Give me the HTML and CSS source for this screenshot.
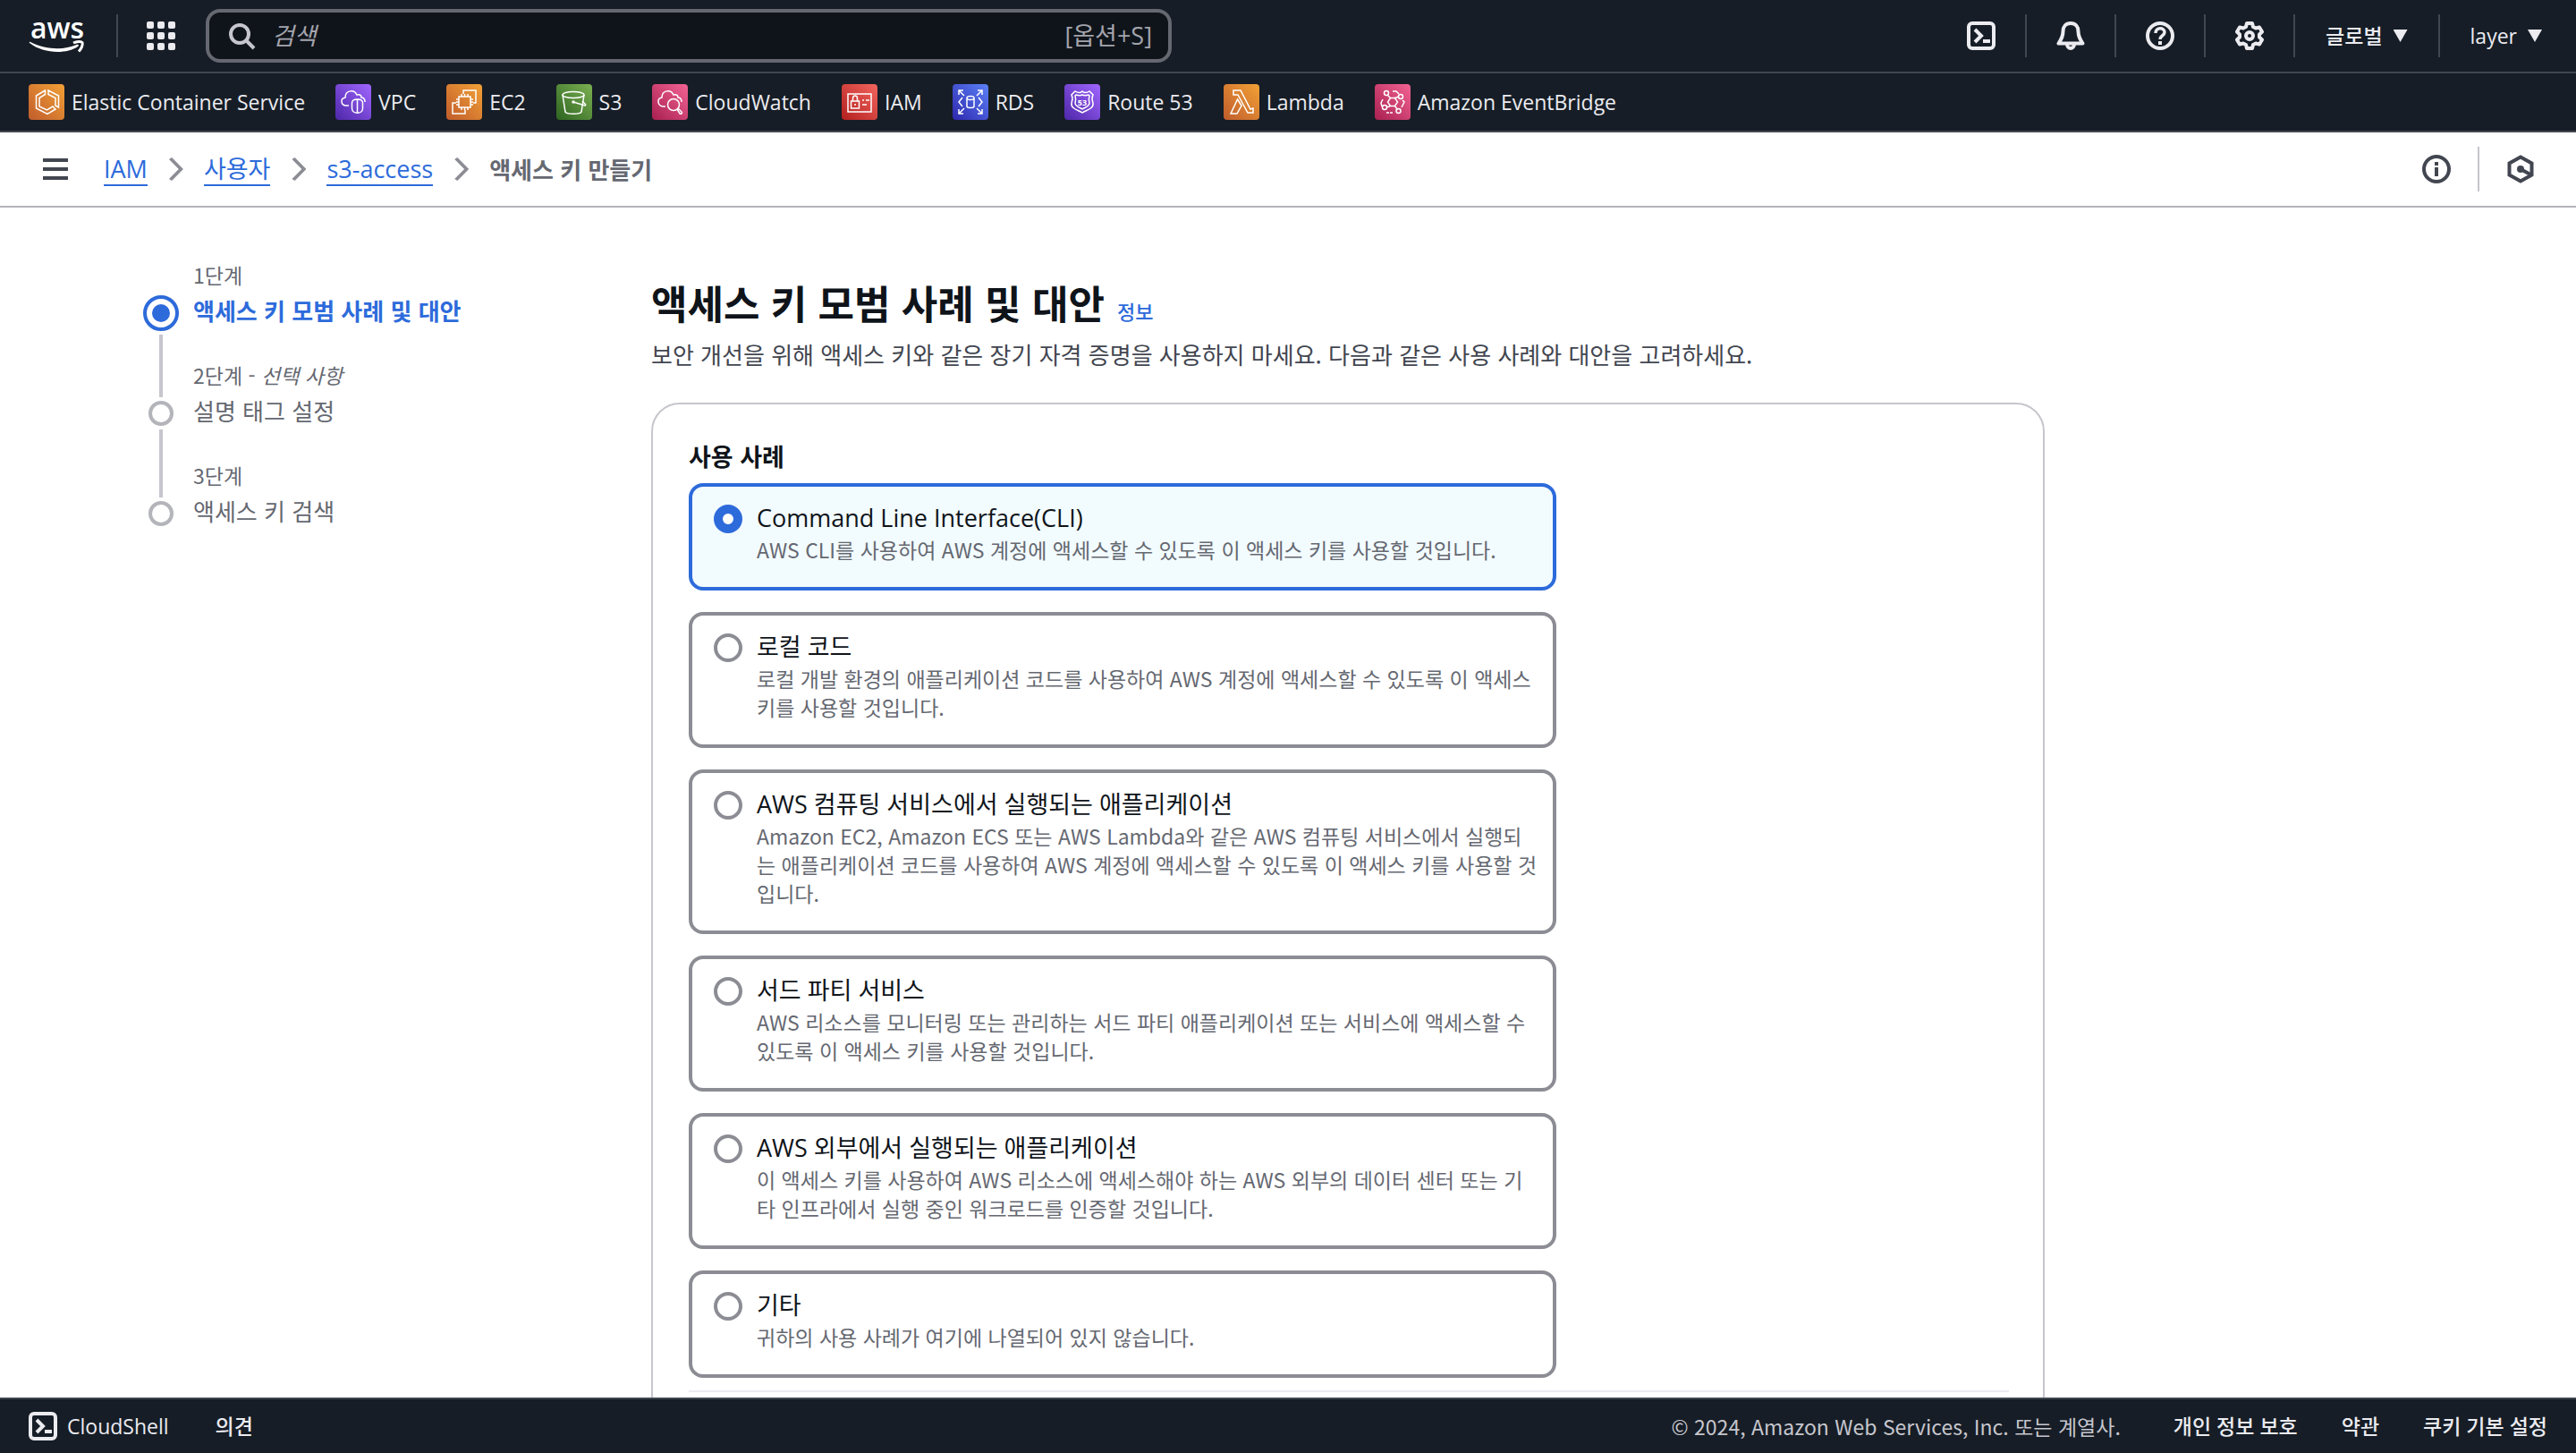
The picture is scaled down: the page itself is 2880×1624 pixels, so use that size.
FILE: index.html
```html
<!DOCTYPE html>
<html lang="ko">
<head>
<meta charset="utf-8">
<meta name="viewport" content="width=device-width, initial-scale=1">
<title>액세스 키 만들기 | IAM</title>
<link rel="stylesheet" href="styles.css">
</head>
<body>
<header class="top">
  <div class="topbar">
    <a class="logo" href="#" aria-label="AWS">
      <svg width="64" height="64" viewBox="0 -7 64 64"><text class="logo-text" x="32" y="28" text-anchor="middle">aws</text><path d="M1 33C16 45 42 46 55 37c2-1.500.5-3-1.500-2C40 41 20 41 2 32c-1-.5-1.500.3-1 1z" fill="#fff"/><path d="M50 33c4-2 9-2 10-.5 1 2-.8 7-4 10" fill="none" stroke="#fff" stroke-width="3"/></svg>
    </a>
    <span class="rule"></span>
    <button class="icon-btn" aria-label="서비스">
      <svg width="32" height="32" viewBox="0 0 32 32" fill="currentColor"><rect width="8" height="8" rx="2"/><rect x="12" width="8" height="8" rx="2"/><rect x="24" width="8" height="8" rx="2"/><rect y="12" width="8" height="8" rx="2"/><rect x="12" y="12" width="8" height="8" rx="2"/><rect x="24" y="12" width="8" height="8" rx="2"/><rect y="24" width="8" height="8" rx="2"/><rect x="12" y="24" width="8" height="8" rx="2"/><rect x="24" y="24" width="8" height="8" rx="2"/></svg>
    </button>
    <label class="search">
      <svg width="32" height="32" viewBox="0 0 32 32" fill="none" stroke="currentColor" stroke-width="4"><circle cx="14" cy="14" r="10"/><path d="M21 21l9 9"/></svg>
      <input type="search" placeholder="검색" aria-label="검색">
      <span class="hint">[옵션+S]</span>
    </label>
    <div class="tools">
      <button class="tool" aria-label="CloudShell"><svg width="32" height="32" viewBox="0 0 32 32" fill="none" stroke="currentColor" stroke-width="4"><rect x="2" y="2" width="28" height="28" rx="4"/><path d="M9 9l7 7-7 7" stroke-width="4"/><path d="M18 22h8"/></svg></button>
      <button class="tool" aria-label="알림"><svg width="32" height="32" viewBox="0 0 32 32" fill="none" stroke="currentColor" stroke-width="4" stroke-linejoin="round"><path d="M16 2c-5.500 0-8.500 4-8.500 9 0 6-2 9-5 13.500h27c-3-4.500-5-7.500-5-13.500 0-5-3-9-8.500-9z"/><path d="M12 25c0 6.500 8 6.500 8 0" /></svg></button>
      <button class="tool" aria-label="도움말"><svg width="32" height="32" viewBox="0 0 32 32" fill="none" stroke="currentColor" stroke-width="4"><circle cx="16" cy="16" r="14"/><path d="M11 13c0-7 10-6.500 10-1 0 4-5 3.500-5 8" stroke-width="3.500"/><path d="M16 22v4"/></svg></button>
      <button class="tool" aria-label="설정"><svg width="32" height="32" viewBox="0 0 32 32" fill="none" stroke="currentColor" stroke-width="4" stroke-linejoin="round"><path d="M13 2h6l1 4 3 1.500 4-1 3 5-3 3v3l3 3-3 5-4-1-3 1.500-1 4h-6l-1-4-3-1.500-4 1-3-5 3-3v-3l-3-3 3-5 4 1L12 6z"/><circle cx="16" cy="16" r="4"/></svg></button>
      <button class="tool menu">글로벌<span class="caret"></span></button>
      <button class="tool menu">layer<span class="caret"></span></button>
    </div>
  </div>
  <nav class="services">
    <a href="#"><span class="badge orange"><svg viewBox="0 0 40 40"><path d="M18.500 7L8.500 13v14L21 33.500 30 28l-3-3-6.500 4L12 25v-9.500l6.500-4zM22 7l11.500 6v13L30 24v-8.500l-8-4z"/></svg></span>Elastic Container Service</a>
    <a href="#"><span class="badge purple"><svg viewBox="0 0 40 40"><path d="M15 24h-3c-6 0-7-8-1-9 0-8 10-10 13-3 4-1 5 1 5 3 3 0 4 2 4 5M24.500 17c4 0 6 2 6 4v6c0 7-12 7-12 0v-6c0-2 2-4 6-4zM24.500 17v15"/></svg></span>VPC</a>
    <a href="#"><span class="badge orange"><svg viewBox="0 0 40 40"><path d="M14 14h13v12H14zM17 11v3M20.500 11v3M24 11v3M17 26v3M20.500 26v3M24 26v3M11 17h3M11 20h3M11 23h3M27 17h3M27 20h3M27 23h3M19 11V7h14v14h-3M11 21H7v12h14v-4"/></svg></span>EC2</a>
    <a href="#"><span class="badge green"><svg viewBox="0 0 40 40"><path d="M7 12l3 19c1 3 17 3 18 0l3-19"/><ellipse cx="19" cy="12" rx="12" ry="3.500"/><path d="M19 20l13 4c2-1-1-3-3-5"/><circle cx="19" cy="20" r="1"/></svg></span>S3</a>
    <a href="#"><span class="badge pink"><svg viewBox="0 0 40 40"><path d="M15 25h-3c-6-1-7-9-1-10 0-8 10-10 13-3 4-1 5 1 5 3 3 0 4 2 4 5"/><circle cx="24" cy="23" r="6.500"/><path d="M28 28l3 5c2 1 3-1 2-2l-4-4"/></svg></span>CloudWatch</a>
    <a href="#"><span class="badge red"><svg viewBox="0 0 40 40"><path d="M7 11h26v20H7zM10.500 19h9v8h-9zM12.500 19v-3c0-4 5-4 5 0v3M15 22v2M23 18h2M27 18h4M23 23h5"/></svg></span>IAM</a>
    <a href="#"><span class="badge blue"><svg viewBox="0 0 40 40"><path d="M7 12V7h5M7 7l6 6M28 7h5v5M33 7l-6 6M7 28v5h5M7 33l6-6M28 33h5v-5M33 33l-6-6M11 15l-4 5 4 5M29 15l4 5-4 5M16 16v9c0 2 8 2 8 0v-9"/><ellipse cx="20" cy="15.500" rx="4" ry="2"/></svg></span>RDS</a>
    <a href="#"><span class="badge purple"><svg viewBox="0 0 40 40"><path d="M12 8c3 2 6 2 8 0 2 2 5 2 8 0l4 4c-2 4-1 6 0 9 1 7-8 8-12 11-4-3-13-4-12-11 1-3 2-5 0-9z"/><path d="M13 12c3 1 5 1 7 0 2 1 4 1 7 0l1 1c-1 3-1 5 0 8 0 4-5 5-8 7-3-2-8-3-8-7 1-3 1-5 0-8z"/><text x="20" y="24" text-anchor="middle">53</text></svg></span>Route 53</a>
    <a href="#"><span class="badge orange"><svg viewBox="0 0 40 40"><path d="M11 7h8l11 21 3-1v5h-6L16 12h-5zM15.500 17l4.500 7-5 9H8z"/></svg></span>Lambda</a>
    <a href="#"><span class="badge pink"><svg viewBox="0 0 40 40"><path d="M17.500 15.500h5l3 4.500-3 4.500h-5l-3-4.500zM14 12l3.500 3.500M22.500 15.500L27 14M22.500 24.500l3 4M17.500 24.500L13 26M20 8h4l3 3M31 18l2 2-3 6M16 32h-3M8 25l-1-4 2-4M20 32h-3"/><circle cx="13" cy="10" r="2.500"/><circle cx="29" cy="14" r="2.500"/><circle cx="26.500" cy="30" r="2.500"/><circle cx="11" cy="26" r="2.500"/></svg></span>Amazon EventBridge</a>
  </nav>
</header>
<div class="pathbar">
  <button class="menu-btn" aria-label="탐색 메뉴"><svg width="28" height="24" viewBox="0 0 28 24" fill="currentColor"><path d="M0 0h28v4H0zM0 10h28v4H0zM0 20h28v4H0z"/></svg></button>
  <nav aria-label="이동 경로">
    <ol class="crumbs">
      <li><a href="#">IAM</a></li>
      <li><a href="#">사용자</a></li>
      <li><a href="#">s3-access</a></li>
      <li class="current">액세스 키 만들기</li>
    </ol>
  </nav>
  <div class="panel-tools">
    <button aria-label="정보 패널"><svg width="32" height="32" viewBox="0 0 32 32" fill="none" stroke="currentColor" stroke-width="4"><circle cx="16" cy="16" r="14"/><path d="M16 8v4M16 14v10"/></svg></button>
    <button aria-label="진단"><svg width="32" height="32" viewBox="0 0 32 32" fill="none" stroke="currentColor" stroke-width="4"><path d="M16 2.500L28.500 9.500v13L16 29.500 3.500 22.500v-13z"/><circle cx="16" cy="16" r="4" fill="currentColor" stroke="none"/><path d="M16 16l11 6"/></svg></button>
  </div>
</div>
<main class="main">
  <ol class="steps">
    <li class="step active"><span class="marker"><i></i></span><div><small>1단계</small><a href="#">액세스 키 모범 사례 및 대안</a></div></li>
    <li class="step"><span class="marker"><i></i></span><div><small>2단계 - <em>선택 사항</em></small><span>설명 태그 설정</span></div></li>
    <li class="step"><span class="marker"><i></i></span><div><small>3단계</small><span>액세스 키 검색</span></div></li>
  </ol>
  <section class="content">
    <div class="heading"><h1>액세스 키 모범 사례 및 대안</h1><a href="#">정보</a></div>
    <p class="lead">보안 개선을 위해 액세스 키와 같은 장기 자격 증명을 사용하지 마세요. 다음과 같은 사용 사례와 대안을 고려하세요.</p>
    <form class="box">
      <fieldset>
        <legend>사용 사례</legend>
        <label class="tile"><input type="radio" name="use" checked><span><b>Command Line Interface(CLI)</b><small>AWS CLI를 사용하여 AWS 계정에 액세스할 수 있도록 이 액세스 키를 사용할 것입니다.</small></span></label>
        <label class="tile"><input type="radio" name="use"><span><b>로컬 코드</b><small>로컬 개발 환경의 애플리케이션 코드를 사용하여 AWS 계정에 액세스할 수 있도록 이 액세스<br>키를 사용할 것입니다.</small></span></label>
        <label class="tile"><input type="radio" name="use"><span><b>AWS 컴퓨팅 서비스에서 실행되는 애플리케이션</b><small>Amazon EC2, Amazon ECS 또는 AWS Lambda와 같은 AWS 컴퓨팅 서비스에서 실행되<br>는 애플리케이션 코드를 사용하여 AWS 계정에 액세스할 수 있도록 이 액세스 키를 사용할 것<br>입니다.</small></span></label>
        <label class="tile"><input type="radio" name="use"><span><b>서드 파티 서비스</b><small>AWS 리소스를 모니터링 또는 관리하는 서드 파티 애플리케이션 또는 서비스에 액세스할 수<br>있도록 이 액세스 키를 사용할 것입니다.</small></span></label>
        <label class="tile"><input type="radio" name="use"><span><b>AWS 외부에서 실행되는 애플리케이션</b><small>이 액세스 키를 사용하여 AWS 리소스에 액세스해야 하는 AWS 외부의 데이터 센터 또는 기<br>타 인프라에서 실행 중인 워크로드를 인증할 것입니다.</small></span></label>
        <label class="tile"><input type="radio" name="use"><span><b>기타</b><small>귀하의 사용 사례가 여기에 나열되어 있지 않습니다.</small></span></label>
      </fieldset>
      <hr>
    </form>
  </section>
</main>
<footer class="footer">
  <button class="shell"><svg width="32" height="32" viewBox="0 0 32 32" fill="none" stroke="currentColor" stroke-width="4"><rect x="2" y="2" width="28" height="28" rx="4"/><path d="M9 9l7 7-7 7"/><path d="M18 22h8"/></svg>CloudShell</button>
  <a href="#">의견</a>
  <span class="copy">© 2024, Amazon Web Services, Inc. 또는 계열사.</span>
  <a href="#">개인 정보 보호</a>
  <a href="#">약관</a>
  <a href="#">쿠키 기본 설정</a>
</footer>
</body>
</html>
```
FILE: styles.css
```css
* { box-sizing: border-box; }
body {
  margin: 0;
  height: 100vh;
  display: flex;
  flex-direction: column;
  background: #fff;
  color: #0f141a;
  font-family: "Open Sans", "Noto Sans CJK KR", sans-serif;
  font-size: 27px;
  line-height: 40px;
}
button {
  display: inline-flex;
  align-items: center;
  padding: 0;
  border: 0;
  background: none;
  color: inherit;
  font: inherit;
}
a { color: inherit; text-decoration: none; }
svg { display: block; flex: none; }
ol { list-style: none; margin: 0; padding: 0; }

/* Global navigation */
.top { background: #161d26; color: #ebebf0; }
.topbar {
  display: flex;
  align-items: center;
  height: 82px;
  padding: 0 38px 0 32px;
  border-bottom: 2px solid #424650;
}
.logo-text { fill: #fff; font-size: 32px; font-weight: 600; }
.rule { width: 2px; height: 48px; margin: 0 32px 0 34px; background: #424650; }
.search {
  display: flex;
  align-items: center;
  flex: 0 1 1080px;
  height: 60px;
  margin-left: 34px;
  padding: 0 18px 0 20px;
  border: 4px solid #656871;
  border-radius: 16px;
  background: #0f141a;
  color: #c6c6cd;
}
.search input {
  flex: 1;
  min-width: 0;
  margin-left: 18px;
  padding: 0;
  border: 0;
  outline: 0;
  background: none;
  color: inherit;
  font: inherit;
}
.search input::placeholder { color: #a4a4ad; font-style: italic; opacity: 1; }
.hint { color: #a4a4ad; }
.tools { display: flex; align-items: center; margin-left: auto; font-size: 23px; font-weight: 500; }
.tool { height: 48px; padding: 0 33px; border-left: 2px solid #424650; }
.tool:first-child { border-left: 0; }
.menu { padding: 0 34px; }
.tool:last-child { padding-right: 0; }
.caret {
  width: 16px;
  height: 14px;
  margin-left: 12px;
  background: currentColor;
  clip-path: polygon(0 0, 100% 0, 50% 100%);
}

/* Favourite services */
.services {
  display: flex;
  align-items: center;
  gap: 34px;
  height: 66px;
  padding: 0 32px;
  border-bottom: 2px solid #424650;
  font-size: 23px;
  white-space: nowrap;
}
.services a { display: flex; align-items: center; gap: 8px; }
.badge { width: 40px; height: 40px; border-radius: 4px; }
.badge svg { width: 40px; height: 40px; fill: none; stroke: #fff; stroke-width: 1.5; }
.badge text { fill: #fff; stroke: none; font-size: 9px; font-weight: 700; }
.orange { background: linear-gradient(45deg, #c05c2c, #f2a136); }
.purple { background: linear-gradient(45deg, #4d27a8, #a166ff); }
.green { background: linear-gradient(45deg, #2d6421, #7cb152); }
.pink { background: linear-gradient(45deg, #a8204f, #f36394); }
.red { background: linear-gradient(45deg, #b2201f, #f4655e); }
.blue { background: linear-gradient(45deg, #2e27ad, #5b81f8); }

/* Breadcrumb bar */
.pathbar {
  display: flex;
  align-items: center;
  flex: none;
  height: 84px;
  padding: 0 46px 0 48px;
  border-bottom: 2px solid #b4b4bb;
  color: #424650;
}
.crumbs { display: flex; margin-left: 40px; }
.crumbs li { display: flex; align-items: center; }
.crumbs li + li::before {
  content: "";
  width: 16px;
  height: 26px;
  margin: 0 23px 0 24px;
  background: #8c8c94;
  clip-path: polygon(0 8%, 20% 0, 100% 50%, 20% 100%, 0 92%, 68% 50%);
}
.crumbs a { height: 38px; line-height: 38px; border-bottom: 2px solid #2d6bdb; color: #2d6bdb; }
.crumbs .current { color: #656871; font-size: 26px; font-weight: 700; }
.panel-tools { display: flex; margin-left: auto; }
.panel-tools button { height: 50px; }
.panel-tools button + button { margin-left: 30px; padding-left: 30px; border-left: 2px solid #c6c6cd; }

/* Wizard */
.main {
  display: grid;
  grid-template-columns: 568px minmax(0, 1558px);
  flex: 1;
  min-height: 0;
  padding: 58px 160px 0;
  overflow-y: auto;
  scrollbar-width: none;
}
.step { display: grid; grid-template-columns: 40px 1fr; gap: 16px; min-height: 112px; color: #656871; font-size: 26px; line-height: 46px; }
.step small { display: block; font-size: 23px; line-height: 34px; }
.step.active a { color: #2d6bdb; font-weight: 700; }
.marker { display: flex; flex-direction: column; align-items: center; }
.marker::before { content: ""; width: 4px; height: 42px; margin-bottom: 4px; background: #c6c6cd; }
.marker::after { content: ""; width: 4px; flex: 1; margin-top: 4px; background: #c6c6cd; }
.marker i { width: 28px; height: 28px; border: 4px solid #b4b4bb; border-radius: 50%; }
.active .marker::before { height: 36px; background: none; }
.active .marker i { width: 40px; height: 40px; padding: 6px; border-color: #2d6bdb; background: #2d6bdb content-box; }
.step:last-child .marker::after { background: none; }

.heading { display: flex; align-items: baseline; gap: 14px; }
h1 { margin: 0; font-size: 44px; line-height: 60px; padding-top: 18px; }
.heading a { color: #2d6bdb; font-size: 22px; font-weight: 500; }
.lead { margin: 8px 0 0; color: #424650; font-size: 26px; }
.box {
  margin-top: 34px;
  padding: 38px 38px 80px 40px;
  border: 2px solid #c6c6cd;
  border-radius: 32px;
}
fieldset { display: grid; gap: 24px; max-width: 970px; margin: 0; padding: 0; border: 0; }
legend { padding: 0; margin-bottom: 10px; font-weight: 700; }
.tile {
  display: flex;
  gap: 16px;
  padding: 16px 0 26px 24px;
  border: 4px solid #8c8c94;
  border-radius: 16px;
}
.tile:has(:checked) { border-color: #2d6bdb; background: #f2fbfe; }
.tile input {
  appearance: none;
  flex: none;
  width: 32px;
  height: 32px;
  margin: 4px 0;
  border: 4px solid #8c8c94;
  border-radius: 50%;
  background: #fff;
}
.tile input:checked { border: 10px solid #2d6bdb; }
.tile b { display: block; font-weight: 400; line-height: 38px; }
.tile small { display: block; color: #656871; font-size: 23px; line-height: 32px; }
.lead, .step, .tile small, h1, legend, .current, .copy { font-family: "Noto Sans CJK KR", "Open Sans", sans-serif; }
hr { margin: 14px 0 0; border: 0; border-top: 2px solid #ebebf0; }

/* Footer */
.footer {
  display: flex;
  align-items: center;
  flex: none;
  height: 62px;
  padding: 0 32px;
  border-top: 2px solid #424650;
  background: #161d26;
  color: #ebebf0;
  font-size: 23px;
  font-weight: 500;
}
.shell { gap: 11px; margin-right: 52px; }
.copy { margin-left: auto; margin-right: 10px; color: #c6c6cd; font-weight: 400; }
.copy ~ a { margin-left: 49px; }
```
